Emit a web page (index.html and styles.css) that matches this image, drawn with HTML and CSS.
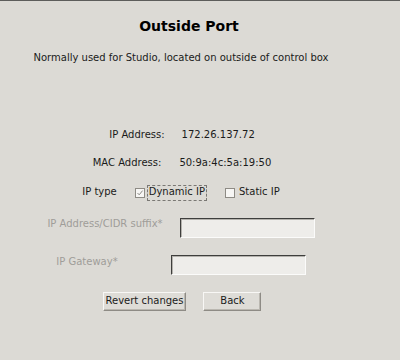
FILE: index.html
```html
<!DOCTYPE html>
<html>
<head>
<meta charset="utf-8">
<link rel="stylesheet" href="styles.css">
</head>
<body>
<div class="page">
  <h1 class="title">Outside Port</h1>
  <p class="subtitle">Normally used for Studio, located on outside of control box</p>

  <div class="row info info-ip"><span>IP Address:</span><span>172.26.137.72</span></div>
  <div class="row info info-mac"><span>MAC Address:</span><span>50:9a:4c:5a:19:50</span></div>

  <div class="row type-row">
    <span class="type-label">IP type</span>
    <label class="check">
      <span class="box">
        <svg width="10" height="10" viewBox="0 0 10 10"><path d="M2.5 5 L4.2 6.8 L7.6 2.6" fill="none" stroke="#8c8a86" stroke-width="1"/></svg>
      </span>
      <span class="check-text focused">Dynamic IP</span>
    </label>
    <label class="check">
      <span class="box"></span>
      <span class="check-text">Static IP</span>
    </label>
  </div>

  <div class="row field field-cidr">
    <span class="field-label">IP Address/CIDR suffix*</span>
    <span class="entry"></span>
  </div>
  <div class="row field field-gw">
    <span class="field-label">IP Gateway*</span>
    <span class="entry"></span>
  </div>

  <div class="row buttons">
    <button class="btn">Revert changes</button>
    <button class="btn btn-back">Back</button>
  </div>
</div>
</body>
</html>
```
FILE: styles.css
```css
html, body {
  margin: 0;
  padding: 0;
  background: #dcdad5;
}
body {
  border-top: 1px solid #5d5d5b;
  height: 359px;
  font-family: "DejaVu Sans", sans-serif;
  font-size: 10px;
  color: #1a1a1a;
}
.page {
  width: 362px;
  display: flex;
  flex-direction: column;
}
.title {
  margin: 16px 0 0 16px;
  font-size: 14px;
  line-height: 18px;
  font-weight: bold;
  text-align: center;
  color: #000;
}
.subtitle {
  margin: 17px 0 0 0;
  line-height: 12px;
  text-align: center;
}
.row {
  display: flex;
  justify-content: center;
  line-height: 12px;
}
.info {
  padding-left: 2px;
}
.info-ip {
  margin-top: 65px;
  gap: 17px;
}
.info-mac {
  margin-top: 16px;
  gap: 18px;
}
.type-row {
  margin-top: 16px;
  padding-left: 2px;
  align-items: flex-start;
  gap: 18px;
}
.type-label {
  padding-top: 1px;
}
.check {
  display: flex;
  align-items: flex-start;
  gap: 2px;
}
.box {
  width: 10px;
  height: 10px;
  margin-top: 3px;
  box-sizing: border-box;
  border: 1px solid #8e8b85;
  background: #f7f6f4;
  position: relative;
}
.box svg {
  position: absolute;
  left: -1px;
  top: -1px;
}
.check-text {
  border: 1px dashed transparent;
  padding: 0 1px 2px 1px;
}
.check-text.focused {
  border-color: #7a7874;
}
.field {
  gap: 17px;
  align-items: flex-start;
}
.field-cidr {
  margin-top: 17px;
}
.field-gw {
  margin-top: 17px;
  gap: 53px;
}
.field-gw .field-label {
  padding-top: 1px;
}
.field-label {
  color: #9f9d99;
}
.entry {
  display: block;
  width: 135px;
  height: 20px;
  box-sizing: border-box;
  background: #eeedea;
  border-top: 1px solid #3e3e3c;
  border-left: 1px solid #3e3e3c;
  border-bottom: 1px solid #fbfbfa;
  border-right: 1px solid #fbfbfa;
  box-shadow: inset 1px 1px 0 #b4b2ad;
}
.buttons {
  margin-top: 17px;
  padding-left: 2px;
  gap: 17px;
}
.btn {
  font-family: "DejaVu Sans", sans-serif;
  font-size: 10px;
  line-height: 12px;
  color: #1a1a1a;
  background: #dedcd7;
  margin: 0;
  padding: 2px 2px 3px 2px;
  box-sizing: border-box;
  height: 19px;
  border-top: 1px solid #f8f7f5;
  border-left: 1px solid #f8f7f5;
  border-bottom: 1px solid #8e8b85;
  border-right: 1px solid #8e8b85;
  box-shadow: inset -1px -1px 0 #bab7b0;
}
.btn-back {
  min-width: 58px;
}
```
